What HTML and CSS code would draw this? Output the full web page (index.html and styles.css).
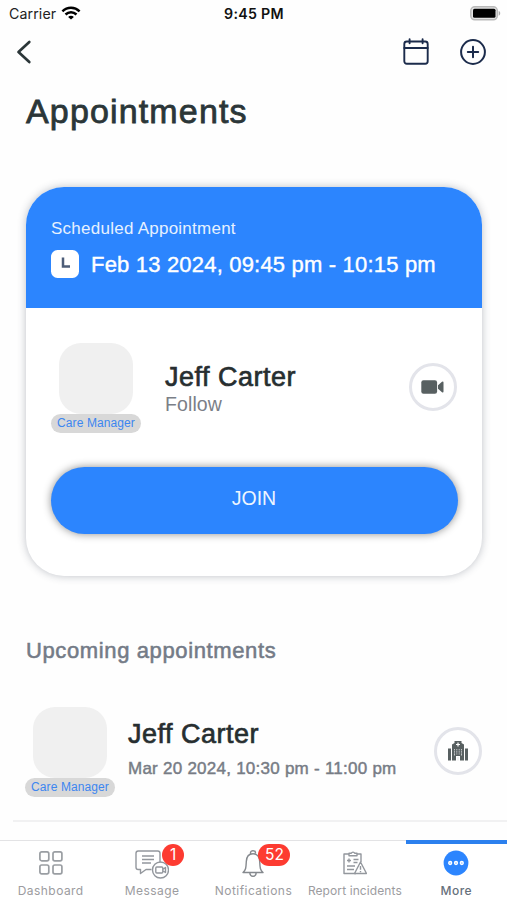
FILE: index.html
```html
<!DOCTYPE html>
<html lang="en">
<head>
<meta charset="utf-8">
<title>Appointments</title>
<link rel="stylesheet" href="styles.css">
</head>
<body>
<div class="status">
  <div class="carrier"><span>Carrier</span>
    <svg width="20" height="14" viewBox="0 0 20 14" fill="none" stroke="#000" stroke-width="2.5"><path d="M1.4 5.3C6.3 .6 13.7 .6 18.6 5.3"/><path d="M4.5 8.5c3.2-3 7.8-3 11 0"/><path d="M10 13.6 7.1 10.9c1.6-1.5 4.2-1.5 5.8 0z" fill="#000" stroke="none"/></svg>
  </div>
  <div class="time">9:45 PM</div>
  <svg class="battery" width="31" height="15" viewBox="0 0 31 15"><rect x=".8" y=".8" width="26.5" height="13" rx="4" fill="#e4e4e4" stroke="#b9b9b9" stroke-width="1.5"/><rect x="3" y="2.800" width="22.500" height="9" rx="1.500" fill="#000"/><path d="M28.700 5c2 .6 2 4 0 4.700z" fill="#aaa"/></svg>
</div>
<nav class="topbar">
  <svg class="back" width="16" height="24" viewBox="0 0 16 24" fill="none" stroke="#2b3638" stroke-width="2.7" stroke-linecap="round" stroke-linejoin="round"><path d="M13.300 2 2.500 12l10.800 10"/></svg>
  <div class="actions">
    <svg width="26" height="28" viewBox="0 0 26 28" fill="none" stroke="#1b2b4b" stroke-width="1.9" stroke-linecap="round"><rect x="1.300" y="3.500" width="23.400" height="22.200" rx="2.500"/><path d="M1.300 10h23.400M6.600 1.300v4M19.600 1.300v4"/></svg>
    <svg width="28" height="28" viewBox="0 0 28 28" fill="none" stroke="#1b2b4b" stroke-width="2" stroke-linecap="round"><circle cx="14" cy="14" r="11.900"/><path d="M14 8.800v10.400M8.800 14h10.400"/></svg>
  </div>
</nav>
<h1>Appointments</h1>
<main>
  <section class="card">
    <header class="card-head">
      <p class="label">Scheduled Appointment</p>
      <div class="when">
        <svg width="28" height="28" viewBox="0 0 28 28"><rect width="28" height="28" rx="6.500" fill="#fff"/><path d="M12 7.500v9h7" fill="none" stroke="#4d5d78" stroke-width="2.500"/></svg>
        <span>Feb 13 2024, 09:45 pm - 10:15 pm</span>
      </div>
    </header>
    <div class="person">
      <div class="avatar-box"><div class="avatar"></div><span class="role">Care Manager</span></div>
      <div class="info"><h2>Jeff Carter</h2><p class="relation">Follow</p></div>
      <div class="round"><svg width="24" height="16" viewBox="0 0 24 16" fill="#586061"><rect x=".3" y="1.200" width="15.800" height="13.600" rx="2.200"/><path d="M17 6.200 21 2.800q1.500-.8 1.500.8v8.800q0 1.600-1.500.8L17 9.800z"/></svg></div>
    </div>
    <button class="join">JOIN</button>
  </section>
  <h3>Upcoming appointments</h3>
  <article class="row">
    <div class="avatar-box"><div class="avatar"></div><span class="role">Care Manager</span></div>
    <div class="info"><h2>Jeff Carter</h2><p class="date">Mar 20 2024, 10:30 pm - 11:00 pm</p></div>
    <div class="round"><svg width="22" height="22" viewBox="0 0 22 22"><path d="M1 8.500h3v12H1zM18 8.500h3v12h-3zM5 20.500V4.500L7.500 3V1h7v2L17 4.500v16h-4v-4.500H9v4.500z" fill="#586061"/><path d="M11 2.500v4M9 4.500h4" stroke="#fff" stroke-width="1.200"/><path d="M7.500 9v6.500M9.800 9v5.500M12.200 9v5.500M14.500 9v6.500M11 17v3.500" stroke="#dfe1e2" stroke-width=".8"/><path d="M6.500 10.700h9M6.500 13h9" stroke="#586061" stroke-width=".7"/></svg></div>
  </article>
</main>
<footer class="tabs">
  <div class="tab"><div class="icon"><svg width="26" height="26" viewBox="0 0 26 26" fill="none" stroke="#9a9ea3" stroke-width="1.700"><rect x="1.900" y="1.900" width="8.900" height="8.900" rx="1.800"/><rect x="15" y="1.900" width="8.900" height="8.900" rx="1.800"/><rect x="1.900" y="15" width="8.900" height="8.900" rx="1.800"/><rect x="15" y="15" width="8.900" height="8.900" rx="1.800"/></svg></div><span>Dashboard</span></div>
  <div class="tab"><div class="icon"><svg width="34" height="30" viewBox="0 0 34 30" fill="none" stroke="#93979d" stroke-width="1.400" stroke-linejoin="round"><path d="M16.500 19.500H11l-5.500 4v-4H3.200Q1 19.500 1 17.300V3.200Q1 1 3.200 1h19.600Q25 1 25 3.200v9.300"/><path d="M7 6h12M7 9.500h12M7 13h9"/><circle cx="25.500" cy="20" r="8"/><rect x="20.800" y="17" width="7" height="6" rx="1"/><path d="m28 19.200 2.500-1.700v5L28 21"/></svg><b class="badge one">1</b></div><span>Message</span></div>
  <div class="tab"><div class="icon"><svg width="22" height="28" viewBox="0 0 22 28" fill="none" stroke="#85898e" stroke-width="1.400" stroke-linejoin="round"><path d="M8.500 3.500V2.700a2.500 2 0 0 1 5 0v.8M1 22.500c3-2.500 3-5 3.300-11C4.600 6.500 7 3.800 11 3.800s6.400 2.700 6.700 7.700c.3 6 .3 8.500 3.300 11zM7.800 22.500c.2 5 6.200 5 6.400 0"/></svg><b class="badge many">52</b></div><span>Notifications</span></div>
  <div class="tab"><div class="icon"><svg width="24" height="26" viewBox="0 0 24 26" fill="none" stroke="#93979d" stroke-width="1.400" stroke-linejoin="round"><path d="M6 4H1v19.500h12M14 4h4v8M6 5.800h8V3.300h-2.300a1.800 1.800 0 0 0-3.400 0H6zM4 10.500h4M6 8.500v4M10.500 9.500h5M10.500 12.500h4M4 16h8M4 19.500h7"/><path d="m17.500 12 6 11.500h-12zM17.500 16v3.800M17.500 21v1.300" fill="#fff"/></svg></div><span class="tight">Report incidents</span></div>
  <div class="tab active"><div class="icon"><svg width="26" height="26" viewBox="0 0 26 26"><circle cx="13" cy="13" r="12.400" fill="#2c85fe"/><g fill="#9bc5ff" stroke="#fff" stroke-width="1.300"><circle cx="7.200" cy="13" r="1.500"/><circle cx="13" cy="13" r="1.500"/><circle cx="18.800" cy="13" r="1.500"/></g></svg></div><span>More</span></div>
</footer>
</body>
</html>
```

FILE: styles.css
```css
* { box-sizing: border-box; margin: 0; padding: 0; }
body {
  width: 507px; height: 900px; overflow: hidden;
  display: flex; flex-direction: column;
  background: #fefefe; color: #2b3234;
  font-family: "Liberation Sans", Arial, sans-serif;
}
svg { display: block; flex: none; }
.status {
  height: 28px; padding: 0 6px 0 9px;
  display: grid; grid-template-columns: 1fr auto 1fr; align-items: center;
  font: 14.2px/28px Inter, sans-serif; color: #222;
}
.carrier { display: flex; gap: 6px; align-items: center; letter-spacing: .1px; }
.carrier svg { margin: -3px 0 0 -1px; }
.time { font-weight: 600; letter-spacing: .3px; color: #111; margin-right: 2px; }
.battery { justify-self: end; margin-top: -1px; }
.topbar { height: 48px; padding: 0 20px 0 16px; display: flex; justify-content: space-between; align-items: center; }
.actions { display: flex; gap: 30px; align-items: center; }
h1 {
  height: 111px; padding: 13px 0 0 26px;
  font-size: 34px; line-height: 44px; font-weight: 400; letter-spacing: 1.15px;
  color: #2b3638; -webkit-text-stroke: .8px #2b3638;
}
main { flex: 1; min-height: 0; }
.card {
  width: 456px; height: 389px; margin-left: 26px;
  border-radius: 38px; overflow: hidden; background: #fff;
  box-shadow: 0 0 9px rgba(40, 50, 70, .3);
}
.card-head { height: 121px; padding: 32px 25px 0; background: #2c85fe; color: #fff; }
.label { font-size: 17px; line-height: 20px; letter-spacing: .25px; color: #e6f1ff; }
.when { display: flex; gap: 12px; align-items: center; margin-top: 11px; height: 28px; font-size: 22px; letter-spacing: .19px; white-space: nowrap; -webkit-text-stroke: .4px #fff; }
.when span { margin-top: 2px; }
.person { height: 159px; padding: 35px 25px 0; display: flex; }
.avatar-box { width: 90px; display: flex; flex-direction: column; align-items: center; flex: none; }
.avatar { width: 74px; height: 71px; background: #f0f0f0; border-radius: 22px; }
.role { width: 90px; height: 19px; border-radius: 10px; background: #d8d8d8; color: #3c86f0; font-size: 12px; line-height: 19px; letter-spacing: .1px; text-align: center; white-space: nowrap; }
.info { flex: 1; white-space: nowrap; }
.card .info { padding: 19px 0 0 24px; }
h2 { font-size: 27px; line-height: 30px; font-weight: 400; letter-spacing: .5px; color: #272e30; -webkit-text-stroke: .65px #272e30; }
.relation { font-size: 19.500px; line-height: 24px; color: #7b7f87; letter-spacing: .1px; }
.round { width: 48px; height: 48px; border: 3px solid #e3e4ea; border-radius: 50%; display: flex; align-items: center; justify-content: center; flex: none; margin-top: 20px; background: #fff; }
.join { display: block; width: 407px; height: 67px; margin-left: 24.500px; padding-bottom: 4px; border: 0; border-radius: 34px; background: #2c85fe; color: #eef5ff; font: 19.500px "Liberation Sans", Arial, sans-serif; box-shadow: 0 0 8px rgba(0, 0, 0, .45); }
h3 { margin: 61px 0 0 26px; font-size: 22px; line-height: 28px; font-weight: 400; letter-spacing: .62px; color: #747b87; -webkit-text-stroke: .55px #747b87; }
.row { margin: 42px 0 0 13px; height: 115px; padding: 0 25px 0 12px; display: flex; border-bottom: 2px solid #f1f1f2; }
.row .info { padding: 12px 0 0 13px; }
.date { margin-top: 8px; font-size: 17px; line-height: 23px; letter-spacing: .25px; color: #777c85; -webkit-text-stroke: .45px #777c85; }
.tabs { height: 59px; display: grid; grid-template-columns: repeat(5, minmax(0, 1fr)); background: #fff; box-shadow: 0 -1px 0 #e3e3e5; }
.tab { display: flex; flex-direction: column; align-items: center; padding-top: 9px; font: 400 12px/16px Inter, sans-serif; color: #9c9ca0; white-space: nowrap; }
.active { border-top: 4px solid #2c80ee; margin-top: -1px; padding-top: 6px; color: #66707b; font-weight: 500; }
.icon { height: 33px; position: relative; }
.tab span { letter-spacing: .45px; }
.tab .tight { letter-spacing: .1px; }
.badge { position: absolute; height: 22px; border-radius: 11px; background: #fd3b31; color: #fff; font: 400 15.500px/22px Inter, sans-serif; text-align: center; }
.one { width: 22px; left: 27px; top: -6px; }
.many { width: 32px; left: 16px; top: -6px; }
```
